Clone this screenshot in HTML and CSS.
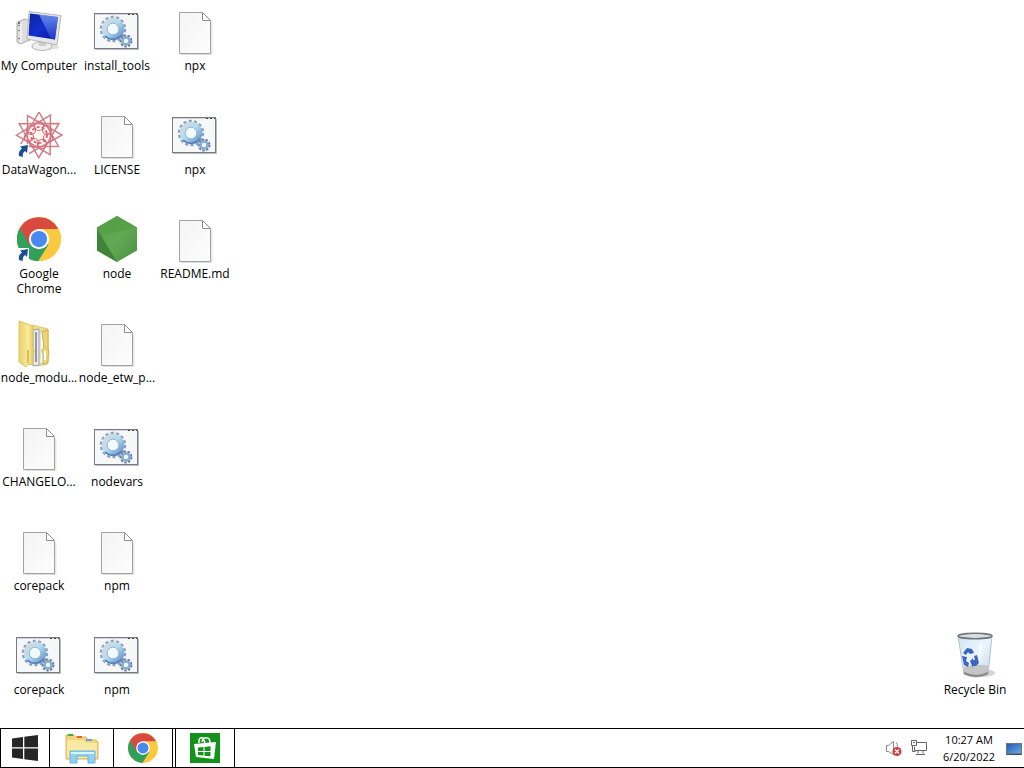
FILE: index.html
```html
<!DOCTYPE html>
<html lang="en">
<head>
<meta charset="utf-8">
<title>Desktop</title>
<link rel="stylesheet" href="styles.css">
</head>
<body>
<svg class="defs" aria-hidden="true">
  <defs>
    <linearGradient id="paper" x1="0" y1="0" x2="1" y2="1"><stop offset="0" stop-color="#f4f4f4"/><stop offset="1" stop-color="#fdfdfd"/></linearGradient>
    <linearGradient id="steel" x1="0" y1="0" x2="1" y2="1"><stop offset="0" stop-color="#d3dae2"/><stop offset=".45" stop-color="#b4dcf2"/><stop offset="1" stop-color="#6b95cc"/></linearGradient>
    <linearGradient id="screen" x1="0" y1="0" x2="1" y2="1"><stop offset="0" stop-color="#0c22a0"/><stop offset=".5" stop-color="#1230cc"/><stop offset="1" stop-color="#0616a0"/></linearGradient>
    <linearGradient id="glare" x1="0" y1="0" x2="0" y2="1"><stop offset="0" stop-color="#9cc0fa"/><stop offset="1" stop-color="#2648d8"/></linearGradient>
    <linearGradient id="folder" x1="0" y1="0" x2="1" y2="0"><stop offset="0" stop-color="#e9cf68"/><stop offset=".6" stop-color="#f8eb9c"/><stop offset="1" stop-color="#ddbf50"/></linearGradient>
    <linearGradient id="glass" x1="0" y1="0" x2="1" y2="1"><stop offset="0" stop-color="#d3e4ef"/><stop offset=".5" stop-color="#eaf5fd"/><stop offset="1" stop-color="#c2d9ec"/></linearGradient>
    <linearGradient id="leaf" x1="0" y1="0" x2="1" y2="1"><stop offset="0" stop-color="#549f47"/><stop offset=".5" stop-color="#62a955"/><stop offset="1" stop-color="#4b8f42"/></linearGradient>
    <linearGradient id="pane" x1="0" y1="0" x2="1" y2="1"><stop offset="0" stop-color="#245aa8"/><stop offset="1" stop-color="#62aaf0"/></linearGradient>
  </defs>
  <symbol id="file" viewBox="0 0 48 48">
    <path d="M10 46.500H40.800V14" fill="none" stroke="#ddd"/>
    <path d="M8.500 4.500H31.500L39.500 13.500V45.500H8.500Z" fill="url(#paper)" stroke="#a2a2a2"/>
    <path d="M31.500 4.500V12.500H39.500Z" fill="#fff" stroke="#8f8f8f"/>
  </symbol>
  <symbol id="batch" viewBox="0 0 48 48">
    <rect x="1.500" y="5.500" width="43" height="35" fill="#f6f7f9" stroke="#777c82"/>
    <path d="M2 41.500H45.500V7" fill="none" stroke="#b9bbbe"/>
    <path d="M2 6.500H44" stroke="#d3d5da"/>
    <path d="M35 6.500h2m2 0h2m2 0h1" stroke="#444"/>
    <circle cx="20" cy="21" r="11.500" fill="none" stroke="#8aa2b8" stroke-width="3.500" stroke-dasharray="3 2.161"/>
    <circle cx="20" cy="21" r="8.300" fill="none" stroke="url(#steel)" stroke-width="6"/>
    <path d="M12 28Q20 35 29 27" fill="none" stroke="#5279b5" stroke-width="1.500"/>
    <circle cx="20" cy="21" r="5.800" fill="#f4fbff" stroke="#8bbcd5"/>
    <circle cx="33" cy="33" r="5.200" fill="none" stroke="#6784a8" stroke-width="2.500" stroke-dasharray="2.300 1.330"/>
    <circle cx="33" cy="33" r="3.500" fill="#eef7ff" stroke="#8babd0" stroke-width="2.500"/>
  </symbol>
  <symbol id="computer" viewBox="0 0 48 48">
    <path d="M2 14 10 11l5 2v19L5 36 2 34Z" fill="#dedede" stroke="#999" stroke-width=".8"/>
    <path d="M2 14l4 2v19" fill="none" stroke="#fff"/>
    <path d="M3 17l2 1m-2 4 2 1m-2 7 2 1" stroke="#777"/>
    <circle cx="4" cy="15" r="1" fill="#444"/>
    <ellipse cx="30" cy="39" rx="14" ry="3" fill="#ccc" opacity=".6"/>
    <ellipse cx="27" cy="38" rx="10" ry="4.500" fill="#eee" stroke="#aaa" stroke-width=".8"/>
    <path d="M23 30h9l-1 8h-7Z" fill="#ccc"/>
    <path d="M14 3.500 46 7.500 42 37 12 31Z" fill="#e4e6e8" stroke="#aaa" stroke-width=".8"/>
    <path d="M15 5.500 43 9 40 31.500 13.500 27.500Z" fill="url(#screen)"/>
    <path d="M24 6.600 43 9 40 31.500 36 30.900Z" fill="url(#glare)" opacity=".6"/>
  </symbol>
  <symbol id="shortcut" viewBox="0 0 12 14">
    <rect width="12" height="14" fill="#fff"/>
    <path d="M3 2.500 11 1 10 9 8 7Q5 9 6 13L2 12Q1 7 5 4.500Z" fill="#1c4f91"/>
  </symbol>
  <symbol id="wagon" viewBox="0 0 48 48">
    <g fill="none" stroke="#d08088" stroke-width="1.500">
      <g id="tri"><path d="M24 0 43.500 34.500H4.500Z"/></g>
      <use href="#tri" transform="rotate(30 24 23)"/>
      <use href="#tri" transform="rotate(60 24 23)"/>
      <use href="#tri" transform="rotate(90 24 23)"/>
    </g>
    <g fill="none" stroke="#e06470" stroke-width="1.200">
      <circle cx="24" cy="14" r="4.500"/><circle cx="32" cy="18" r="4.500"/><circle cx="33" cy="26" r="4.500"/><circle cx="27" cy="32" r="4.500"/><circle cx="19" cy="31" r="4.500"/><circle cx="14" cy="25" r="4.500"/><circle cx="16" cy="18" r="4.500"/>
      <circle cx="24" cy="23" r="8" stroke-dasharray="3 2" stroke-width="2"/>
    </g>
    <circle cx="24" cy="23" r="4" fill="#fff8ec"/>
  </symbol>
  <symbol id="chrome" viewBox="0 0 48 48">
    <circle cx="24" cy="24" r="24" fill="#fbc940"/>
    <path d="M24 24H13L3.200 12A24 24 0 0 0 23 48L34.400 30Z" fill="#31a05b"/>
    <path d="M3.200 12A24 24 0 0 1 44.800 13H24L13.600 30Z" fill="#d84a3f"/>
    <circle cx="24" cy="24" r="11" fill="#fff"/>
    <circle cx="24" cy="24" r="8.800" fill="#4a8af0"/>
  </symbol>
  <symbol id="node" viewBox="0 0 48 48">
    <path d="M24 0 44 11.500V34.500L24 46 4 34.500V11.500Z" fill="url(#leaf)"/>
    <path d="M24 0 4 11.500V20L44 11.500Z" fill="#56a148"/>
    <path d="M4 13 24 46 4 34.500Z" fill="#3e8539"/>
  </symbol>
  <symbol id="modules" viewBox="0 0 48 48">
    <path d="M17 5 33 9V44L21 46Z" fill="#f2de88" stroke="#dbc873"/>
    <path d="M18 10 24 9V45L18 46Z" fill="#e9edf2" stroke="#9aa1aa"/>
    <path d="M21 12v30" stroke="#737d90" stroke-width="1.500"/>
    <path d="M25 12 29 10V42l-4 2Z" fill="#fff" stroke="#c9c9c9"/>
    <path d="M27 12 33 10V29q2 3 0 8v5l-5 3V34q-3-4 1-6Z" fill="#eed575" stroke="#ceb04c"/>
    <path d="M30 31v9" stroke="#fff" stroke-width="2"/>
    <path d="M4 1 18 6V28q3 4 0 7V45l-5-1-2 3-7-5Z" fill="url(#folder)" stroke="#dec467"/>
    <path d="M13 30v13" stroke="#bd9631"/>
  </symbol>
  <symbol id="bin" viewBox="0 0 48 48">
    <ellipse cx="31" cy="41" rx="13" ry="4" fill="#aaa" opacity=".5"/>
    <path d="M7 4 41 4 37 42Q25 48 13 42Z" fill="url(#glass)" stroke="#a6b2bd" stroke-width=".8"/>
    <path d="M12 35Q25 31 38 34L37 42Q25 47 13 42Z" fill="#c3c5c6"/>
    <path d="M13 41Q25 47 37 41" fill="none" stroke="#8a8a8a" stroke-width="2"/>
    <ellipse cx="24" cy="4" rx="17" ry="2.700" fill="#d8e0e6" stroke="#70767c" stroke-width="1.600"/>
    <path d="M30 11 28 32" stroke="#fff" stroke-width="3" opacity=".6"/>
    <g fill="#3c65c8"><path d="M12 21l4-5 5 1 2 4-4 1-2-2-2 3Z"/><path d="M11 24l5 1-1 4 3 2-1 4-4-2Z"/><path d="M19 29l3-3v2h2l-1-4 3-1 2 8-3 3h-3v2Z"/></g>
  </symbol>
  <symbol id="windows" viewBox="0 0 26 26">
    <path d="M0 3.500 11 2V12.300H0ZM12.300 1.800 26 0V12.300H12.300ZM0 13.600H11V24L0 22.400ZM12.300 13.600H26V26L12.300 24.200Z" fill="#252525"/>
  </symbol>
  <symbol id="explorer" viewBox="0 0 34 32">
    <path d="M1 6V3h8l2 2h10l2 3h8l2 2v17H1Z" fill="#f2d679" stroke="#d9b853"/>
    <path d="M3 3h5" stroke="#3eae43" stroke-width="2"/><path d="M12 5h5" stroke="#df662d" stroke-width="2"/><path d="M21 8h6" stroke="#689ddb" stroke-width="2"/>
    <path d="M2 8h16l3 3h11v15H2Z" fill="#fae9a4"/>
    <path d="M5 31V19h25v12h-7v-7H12v7Z" fill="#91d0ef" stroke="#65b7df"/>
    <path d="M6 21h23" stroke="#d8f4ff" stroke-width="2"/>
  </symbol>
  <symbol id="store" viewBox="0 0 30 30">
    <rect width="30" height="30" fill="#13931b"/>
    <path d="M9 10V7q1-3 4-2l2 5M12 9q1-5 5-4 3 0 3 5" fill="none" stroke="#fff" stroke-width="1.500"/>
    <path d="M4 11 26 9 24 26 6 24Z" fill="#fff"/>
    <path d="M8 14.500 13.500 14v4H8Zm6.500-.6 6-.7V18h-6ZM8 19h5.500v3.500L8 22Zm6.500 0h6v4.300l-6-.6Z" fill="#13931b"/>
  </symbol>
  <symbol id="speaker" viewBox="0 0 18 18">
    <path d="M2.500 6.500h2l5-4v13l-5-3h-2Zm10-3q1 2 1 4" fill="none" stroke="#888"/>
    <circle cx="13" cy="12.500" r="4.500" fill="#d13b48"/><path d="M11 10.500l4 4m0-4-4 4" stroke="#fff" stroke-width="1.300"/>
  </symbol>
  <symbol id="network" viewBox="0 0 18 18">
    <path d="M7 3.500h10.500v8H5.500V8M9 11.500v3m5-3v3m-7 1h9M2.500 1.500h5v5h-5ZM4 3.500h2m-2.500 3v6h3" fill="none" stroke="#666"/>
  </symbol>
  <symbol id="monitor" viewBox="0 0 16 14">
    <path d="M0 2H16V14H0Z" fill="#68788c"/><path d="M1 3H15V12H1Z" fill="url(#pane)"/><path d="M1 13.500h14" stroke="#3c4b60"/>
  </symbol>
</svg>

<main class="desktop">
  <div class="icons">
    <button class="item"><svg class="icon"><use href="#computer"/></svg><span>My Computer</span></button>
    <button class="item"><span class="icon linked"><svg class="icon"><use href="#wagon"/></svg><svg class="arrow"><use href="#shortcut"/></svg></span><span>DataWagon...</span></button>
    <button class="item"><span class="icon linked"><svg class="icon" viewBox="-2 -1 52 52"><use href="#chrome" width="48" height="48"/></svg><svg class="arrow"><use href="#shortcut"/></svg></span><span>Google Chrome</span></button>
    <button class="item"><svg class="icon"><use href="#modules"/></svg><span>node_modu...</span></button>
    <button class="item"><svg class="icon"><use href="#file"/></svg><span>CHANGELO...</span></button>
    <button class="item"><svg class="icon"><use href="#file"/></svg><span>corepack</span></button>
    <button class="item"><svg class="icon"><use href="#batch"/></svg><span>corepack</span></button>
    <button class="item"><svg class="icon"><use href="#batch"/></svg><span>install_tools</span></button>
    <button class="item"><svg class="icon"><use href="#file"/></svg><span>LICENSE</span></button>
    <button class="item"><svg class="icon"><use href="#node"/></svg><span>node</span></button>
    <button class="item"><svg class="icon"><use href="#file"/></svg><span>node_etw_p...</span></button>
    <button class="item"><svg class="icon"><use href="#batch"/></svg><span>nodevars</span></button>
    <button class="item"><svg class="icon"><use href="#file"/></svg><span>npm</span></button>
    <button class="item"><svg class="icon"><use href="#batch"/></svg><span>npm</span></button>
    <button class="item"><svg class="icon"><use href="#file"/></svg><span>npx</span></button>
    <button class="item"><svg class="icon"><use href="#batch"/></svg><span>npx</span></button>
    <button class="item"><svg class="icon"><use href="#file"/></svg><span>README.md</span></button>
  </div>
  <button class="item recycle"><svg class="icon"><use href="#bin"/></svg><span>Recycle Bin</span></button>
</main>

<footer class="taskbar">
  <button class="task start" aria-label="Start"><svg class="start-icon"><use href="#windows"/></svg></button>
  <button class="task explorer" aria-label="File Explorer"><svg class="explorer-icon"><use href="#explorer"/></svg></button>
  <button class="task" aria-label="Google Chrome"><svg class="task-icon"><use href="#chrome"/></svg></button>
  <button class="task store" aria-label="Store"><svg class="task-icon"><use href="#store"/></svg></button>
  <div class="tray">
    <button class="tray-button" aria-label="Volume muted"><svg class="tray-icon"><use href="#speaker"/></svg></button>
    <button class="tray-button" aria-label="Network"><svg class="tray-icon"><use href="#network"/></svg></button>
    <button class="clock"><span>10:27 AM</span><span>6/20/2022</span></button>
    <button class="tray-button" aria-label="Show desktop"><svg class="monitor-icon"><use href="#monitor"/></svg></button>
  </div>
</footer>
</body>
</html>
```
FILE: styles.css
```css
* {
  box-sizing: border-box;
}

body {
  margin: 0;
  height: 100vh;
  display: flex;
  flex-direction: column;
  background: #fff;
  color: #000;
  font: 12px/15px "Open Sans", "Noto Sans", sans-serif;
}

button {
  margin: 0;
  padding: 0;
  border: 0;
  background: none;
  color: inherit;
  font: inherit;
}

svg {
  display: block;
}

.defs {
  position: absolute;
  width: 0;
  height: 0;
}

.desktop {
  flex: 1;
  min-height: 0;
  display: flex;
  justify-content: space-between;
}

.icons {
  display: grid;
  grid-auto-flow: column;
  grid-template-rows: repeat(auto-fill, 104px);
  grid-auto-columns: 78px;
}

.item {
  width: 78px;
  height: 104px;
  padding-top: 8px;
  display: flex;
  flex-direction: column;
  align-items: center;
  gap: 2px;
  text-align: center;
}

.icon {
  width: 48px;
  height: 48px;
}

.linked {
  position: relative;
}

.arrow {
  position: absolute;
  left: 2px;
  bottom: 2px;
  width: 12px;
  height: 14px;
}

.recycle {
  align-self: flex-end;
  margin-right: 10px;
}

.taskbar {
  height: 40px;
  display: flex;
  border: solid #000;
  border-width: 1px 0 1px 1px;
}

.task {
  width: 59px;
  display: flex;
  align-items: center;
  justify-content: center;
  border-right: 1px solid #000;
}

.start {
  width: 49px;
}

.explorer {
  width: 64px;
}

.store {
  width: 60px;
  margin-left: 2px;
  border-left: 1px solid #000;
}

.start-icon {
  width: 26px;
  height: 26px;
}

.explorer-icon {
  width: 34px;
  height: 32px;
}

.task-icon {
  width: 30px;
  height: 30px;
}

.tray {
  margin-left: auto;
  padding-right: 2px;
  display: flex;
  align-items: center;
  gap: 7px;
}

.tray-icon {
  width: 18px;
  height: 18px;
}

.clock {
  width: 60px;
  margin-left: 5px;
  display: flex;
  flex-direction: column;
  align-items: center;
  font-size: 11px;
  line-height: 17px;
}

.monitor-icon {
  width: 16px;
  height: 14px;
}
```
